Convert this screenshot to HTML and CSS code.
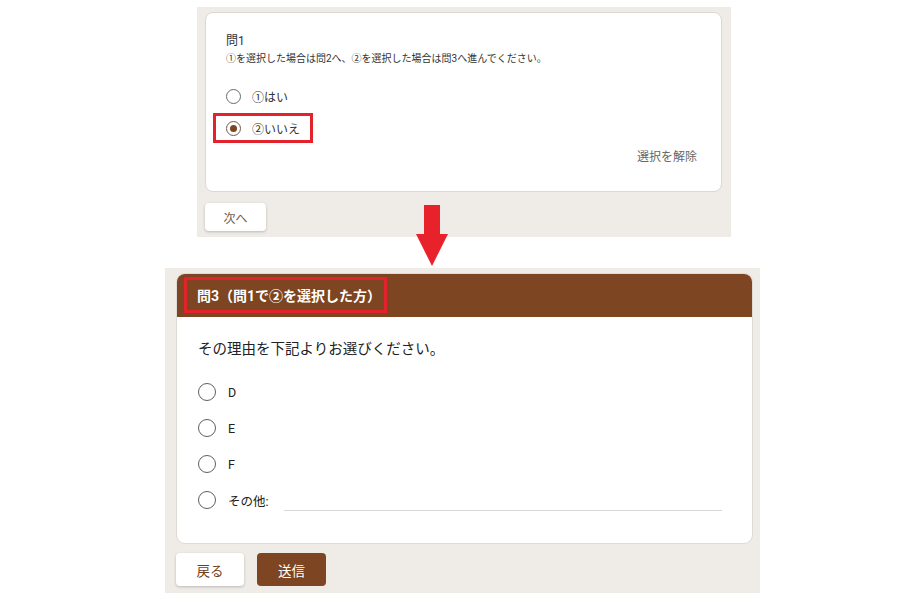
FILE: index.html
```html
<!DOCTYPE html>
<html lang="ja">
<head>
<meta charset="utf-8">
<title>フォーム</title>
<link rel="stylesheet" href="styles.css">
</head>
<body>
<div class="page">
  <section class="panel panel-top">
    <div class="card card-q1">
      <div class="q-title">問1</div>
      <div class="q-desc">①を選択した場合は問2へ、②を選択した場合は問3へ進んでください。</div>
      <div class="opts-sm">
        <div class="opt-sm"><span class="radio-sm"></span><span class="opt-label-sm">①はい</span></div>
        <div class="opt-sm opt-hl"><span class="radio-sm checked"></span><span class="opt-label-sm">②いいえ</span></div>
      </div>
      <div class="clear-row"><span class="clear">選択を解除</span></div>
    </div>
    <div class="btn-row-sm"><button class="btn-next">次へ</button></div>
  </section>

  <div class="connector">
    <svg class="arrow" width="32" height="62" viewBox="0 0 32 62">
      <rect x="8" y="0" width="16" height="31" fill="#e8222a"/>
      <polygon points="0,29 32,29 16,61" fill="#e8222a"/>
    </svg>
  </div>

  <section class="panel panel-bottom">
    <div class="card card-q3">
      <div class="q3-header"><span class="q3-title">問3（問1で②を選択した方）</span></div>
      <div class="q3-body">
        <div class="q3-text">その理由を下記よりお選びください。</div>
        <div class="opts">
          <div class="opt"><span class="radio"></span><span class="opt-label">D</span></div>
          <div class="opt"><span class="radio"></span><span class="opt-label">E</span></div>
          <div class="opt"><span class="radio"></span><span class="opt-label">F</span></div>
          <div class="opt"><span class="radio"></span><span class="opt-label">その他:</span><span class="other-field"></span></div>
        </div>
      </div>
    </div>
    <div class="btn-row">
      <button class="btn btn-back">戻る</button>
      <button class="btn btn-send">送信</button>
    </div>
  </section>
</div>
</body>
</html>
```

FILE: styles.css
```css
* { box-sizing: border-box; }
html, body { margin: 0; padding: 0; background: #ffffff; }
body {
  font-family: Roboto, "Noto Sans CJK JP", sans-serif;
  color: #202124;
}
.page {
  width: 900px;
  height: 600px;
  padding-top: 7px;
  display: flex;
  flex-direction: column;
}
.panel { background: #efebe7; }

/* top panel */
.panel-top {
  margin-left: 197px;
  width: 534px;
  height: 230px;
  padding: 5px 9px 6px 8px;
}
.card {
  background: #fff;
  border-radius: 8px;
}
.card-q1 {
  height: 180px;
  border: 1px solid #dcd8d4;
  padding: 20px 24px 0 20px;
  display: flex;
  flex-direction: column;
}
.q-title {
  font-size: 12px;
  line-height: 16px;
  color: #333;
}
.q-desc {
  margin-top: 3px;
  font-size: 10px;
  line-height: 14px;
  color: #333;
}
.opts-sm {
  margin-top: 15px;
  display: flex;
  flex-direction: column;
  gap: 2px;
}
.opt-sm {
  height: 30px;
  display: flex;
  align-items: center;
  align-self: flex-start;
}
.opt-hl {
  margin-left: -13px;
  padding-left: 10px;
  padding-right: 10px;
  border: 3px solid #e3232b;
}
.radio-sm {
  width: 15px;
  height: 15px;
  border: 1.5px solid #6b6b6b;
  border-radius: 50%;
  display: flex;
  align-items: center;
  justify-content: center;
}
.radio-sm.checked { border-color: #7a5a47; }
.radio-sm.checked::after {
  content: "";
  width: 7px;
  height: 7px;
  border-radius: 50%;
  background: #7d4521;
}
.opt-label-sm {
  margin-left: 11px;
  font-size: 12px;
  color: #333;
}
.clear-row {
  margin-top: 6px;
  display: flex;
  justify-content: flex-end;
}
.clear {
  font-size: 12px;
  line-height: 16px;
  color: #666;
}
.btn-row-sm { margin-top: 11px; }
.btn-next {
  width: 61px;
  height: 28px;
  border: none;
  border-radius: 4px;
  background: #fff;
  box-shadow: 0 1px 3px rgba(0,0,0,0.22);
  font-family: inherit;
  font-size: 12px;
  color: #7a5c4a;
  padding: 0;
}

/* arrow connector */
.connector {
  height: 31px;
  position: relative;
}
.arrow {
  position: absolute;
  left: 416px;
  top: -32px;
}

/* bottom panel */
.panel-bottom {
  margin-left: 165px;
  width: 595px;
  height: 325px;
  padding: 6px 8px 7px 12px;
}
.card-q3 {
  height: 269px;
  box-shadow: 0 0 0 1px #dedad6;
  overflow: hidden;
  display: flex;
  flex-direction: column;
}
.q3-header {
  height: 43px;
  background: #7d4521;
  padding: 3px 0 4px 7px;
  display: flex;
}
.q3-title {
  border: 3px solid #e3232b;
  padding: 0 3px 0 10px;
  display: flex;
  align-items: center;
  color: #fff;
  font-weight: bold;
  font-size: 14px;
}
.q3-body {
  padding: 23px 30px 0 21px;
}
.q3-text {
  font-size: 14.5px;
  line-height: 20px;
  color: #222;
}
.opts {
  margin-top: 14px;
  display: flex;
  flex-direction: column;
}
.opt {
  height: 36px;
  display: flex;
  align-items: center;
}
.radio {
  width: 18px;
  height: 18px;
  border: 1.5px solid #5f5f5f;
  border-radius: 50%;
  flex: none;
}
.opt-label {
  margin-left: 12px;
  font-size: 12.5px;
  color: #222;
}
.other-field {
  flex: 1;
  height: 22px;
  margin-left: 15px;
  border-bottom: 1px solid #d6d6d6;
}
.btn-row {
  margin-top: 10px;
  display: flex;
  gap: 13px;
  margin-left: -1px;
}
.btn {
  height: 33px;
  border: none;
  border-radius: 4px;
  font-family: inherit;
  font-size: 13.5px;
  padding: 0;
}
.btn-back {
  width: 68px;
  background: #fff;
  color: #6e3f22;
  box-shadow: 0 1px 3px rgba(0,0,0,0.22);
}
.btn-send {
  width: 69px;
  background: #7d4521;
  color: #fff;
}
```
